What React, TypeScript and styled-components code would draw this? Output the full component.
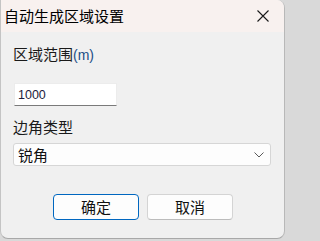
import React from 'react';
import styled, { createGlobalStyle } from 'styled-components';

const GlobalStyle = createGlobalStyle`
  html, body {
    margin: 0;
    padding: 0;
    background: #d9d9d9;
  }
  body {
    width: 286px;
    height: 241px;
    overflow: hidden;
    font-family: "Noto Sans CJK SC", "Liberation Sans", sans-serif;
  }
`;

const Window = styled.div`
  width: 285px;
  height: 239px;
  box-sizing: border-box;
  display: flex;
  flex-direction: column;
  background: #f0f0f0;
  border-right: 1px solid #b8b8b8;
  border-bottom: 1px solid #a8a8a8;
  border-left: 1px solid #c4c4c4;
  border-radius: 0 8px 8px 8px;
  overflow: hidden;
`;

const TitleBar = styled.div`
  height: 32px;
  flex: none;
  display: flex;
  align-items: center;
  justify-content: space-between;
  padding: 0 14px 0 3px;
  background: #f8f1ef;
`;

const Title = styled.span`
  font-size: 15px;
  line-height: 20px;
  color: #000;
`;

const CloseButton = styled.button`
  width: 14px;
  height: 14px;
  padding: 0;
  border: none;
  background: transparent;
  display: flex;
  align-items: center;
  justify-content: center;
`;

const Body = styled.div`
  flex: 1;
  display: flex;
  flex-direction: column;
  padding: 0 13px 0 12px;
`;

const Label = styled.div<{ $top: number }>`
  margin-top: ${({ $top }) => $top}px;
  font-size: 15px;
  line-height: 20px;
  color: #1a1a1a;
`;

const Unit = styled.span`
  font-family: "Liberation Sans", sans-serif;
  font-size: 14px;
  color: #1b4f86;
`;

const TextInput = styled.input`
  margin: 18px 0 0 1px;
  width: 103px;
  height: 23px;
  box-sizing: border-box;
  padding: 0 0 0 3px;
  border: 1px solid #ececec;
  border-bottom: 1px solid #7a7a7a;
  background: #fff;
  font-family: "Liberation Sans", sans-serif;
  font-size: 12.5px;
  color: #1c1c3c;
  outline: none;
`;

const Select = styled.div`
  margin-top: 6px;
  height: 23px;
  box-sizing: border-box;
  display: flex;
  align-items: center;
  justify-content: space-between;
  padding: 0 6px 0 4px;
  background: #fdfdfd;
  border: 1px solid #d6d6d6;
  border-radius: 3px;
  font-size: 15px;
  color: #111;
`;

const ButtonRow = styled.div`
  margin-top: 28px;
  display: flex;
  justify-content: center;
  gap: 8px;
  padding-left: 2px;
`;

const Button = styled.button<{ $primary?: boolean }>`
  width: 86px;
  height: 26px;
  box-sizing: border-box;
  padding: 0;
  background: #fdfdfd;
  border: 1px solid ${({ $primary }) => ($primary ? '#0067c0' : '#d4d4d4')};
  border-bottom-color: ${({ $primary }) => ($primary ? '#0067c0' : '#bcbcbc')};
  border-radius: 4px;
  font-family: "Noto Sans CJK SC", sans-serif;
  font-size: 15px;
  line-height: 20px;
  color: #111;
`;

const App: React.FC = () => (
  <>
    <GlobalStyle />
    <Window>
      <TitleBar>
        <Title>自动生成区域设置</Title>
        <CloseButton aria-label="关闭">
          <svg width="12" height="12" viewBox="0 0 12 12">
            <path d="M0.5 0.5 L11.5 11.5 M11.5 0.5 L0.5 11.5" stroke="#1a1a1a" strokeWidth="1.1" fill="none" />
          </svg>
        </CloseButton>
      </TitleBar>
      <Body>
        <Label $top={12}>
          区域范围<Unit>(m)</Unit>
        </Label>
        <TextInput defaultValue="1000" />
        <Label $top={11}>边角类型</Label>
        <Select>
          <span>锐角</span>
          <svg width="10" height="6" viewBox="0 0 10 6">
            <path d="M0.5 0.5 L5 5 L9.5 0.5" stroke="#5a5a5a" strokeWidth="1" fill="none" />
          </svg>
        </Select>
        <ButtonRow>
          <Button $primary>确定</Button>
          <Button>取消</Button>
        </ButtonRow>
      </Body>
    </Window>
  </>
);

export default App;
